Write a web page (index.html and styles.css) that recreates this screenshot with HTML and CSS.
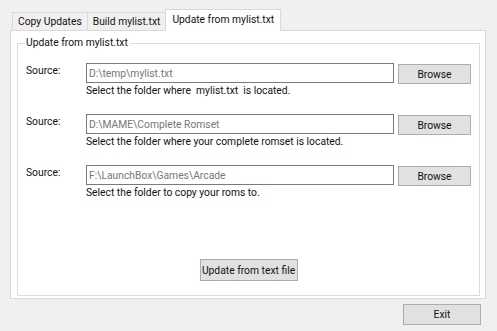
FILE: index.html
```html
<!DOCTYPE html>
<html lang="en">
<head>
    <meta charset="UTF-8">
    <title>Update from mylist.txt</title>
    <link rel="stylesheet" href="styles.css">
</head>
<body>
    <div class="window">
        <div class="tabs">
            <div class="tab">Copy Updates</div>
            <div class="tab">Build mylist.txt</div>
            <div class="tab active">Update from mylist.txt</div>
        </div>

        <div class="tab-page">
            <fieldset class="group">
                <legend>Update from mylist.txt</legend>

                <div class="source-row">
                    <label class="source-label">Source:</label>
                    <input class="path" type="text" value="D:\temp\mylist.txt" readonly>
                    <button class="btn browse">Browse</button>
                    <div class="hint">Select the folder where &nbsp;mylist.txt &nbsp;is located.</div>
                </div>

                <div class="source-row">
                    <label class="source-label">Source:</label>
                    <input class="path" type="text" value="D:\MAME\Complete Romset" readonly>
                    <button class="btn browse">Browse</button>
                    <div class="hint">Select the folder where your complete romset is located.</div>
                </div>

                <div class="source-row">
                    <label class="source-label">Source:</label>
                    <input class="path" type="text" value="F:\LaunchBox\Games\Arcade" readonly>
                    <button class="btn browse">Browse</button>
                    <div class="hint">Select the folder to copy your roms to.</div>
                </div>

                <button class="btn update">Update from text file</button>
            </fieldset>
        </div>

        <div class="footer">
            <button class="btn exit">Exit</button>
        </div>
    </div>
</body>
</html>
```

FILE: styles.css
```css
/* Classic WinForms look */
body {
    margin: 0;
    background-color: #f0f0f0;
    font-family: 'Roboto', 'Liberation Sans', sans-serif;
    font-size: 10.3px;
    color: #111;
}

.window {
    width: 497px;
    height: 331px;
}

.tabs {
    display: flex;
    align-items: flex-end;
    height: 21px;
    margin: 9px 0 0 12px;
    position: relative;
    z-index: 1;
}

.tab {
    box-sizing: border-box;
    height: 18px;
    line-height: 18px;
    padding: 0 5px;
    margin-left: -1px;
    border: 1px solid #d9d9d9;
    border-bottom: none;
    background-color: #f0f0f0;
    white-space: nowrap;
}

.tab:first-child {
    margin-left: 0;
}

.tab.active {
    height: 22px;
    line-height: 20px;
    padding: 0 6px;
    margin-bottom: -1px;
    background-color: #fff;
}

.tab-page {
    box-sizing: border-box;
    display: flex;
    height: 269px;
    margin: 0 11px 0 10px;
    padding: 5px 5px 2px 6px;
    border: 1px solid #d9d9d9;
    background-color: #fff;
}

.group {
    flex: 1;
    display: flex;
    flex-direction: column;
    min-width: 0;
    margin: 0;
    padding: 0 8px 14px 8px;
    border: 1px solid #dcdcdc;
}

.group legend {
    margin-left: -2px;
    padding: 0 2px;
    line-height: 14px;
}

.source-row {
    display: grid;
    grid-template-columns: 56px 308px 73px;
    column-gap: 4px;
    margin-top: 13px;
}

.source-row + .source-row {
    margin-top: 16px;
}

.source-label {
    margin-top: 1px;
    line-height: 14px;
}

.path {
    box-sizing: border-box;
    height: 20px;
    margin: 0;
    padding: 0 2px;
    border: 1px solid #7a7a7a;
    background-color: #fff;
    color: #777;
    font: inherit;
    outline: none;
}

.hint {
    grid-column: 2 / 4;
    line-height: 14px;
    white-space: nowrap;
}

.btn {
    box-sizing: border-box;
    margin: 0;
    padding: 0;
    border: 1px solid #adadad;
    background-color: #e1e1e1;
    color: #111;
    font: inherit;
}

.browse {
    height: 20px;
    margin-top: 1px;
}

.update {
    align-self: center;
    width: 98px;
    height: 22px;
    margin-top: auto;
    white-space: nowrap;
}

.footer {
    display: flex;
    justify-content: flex-end;
    padding: 5px 16px 0 0;
}

.exit {
    width: 78px;
    height: 21px;
}
```
